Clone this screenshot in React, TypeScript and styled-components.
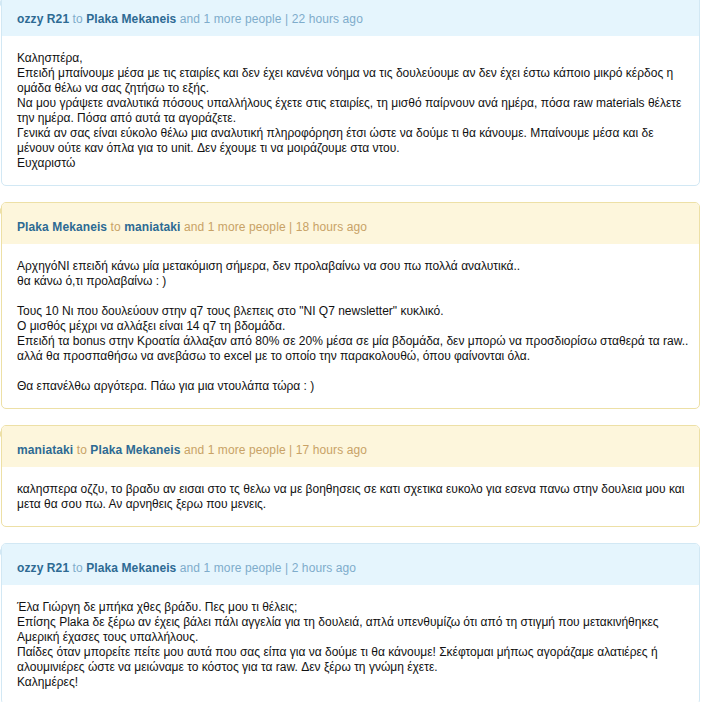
import React from "react";
import styled, { createGlobalStyle } from "styled-components";

const Global = createGlobalStyle`
  html, body { margin: 0; padding: 0; background: #ffffff; }
  body { font-family: "Liberation Sans", Arial, sans-serif; font-size: 12px; color: #111; }
`;

type Tone = "blue" | "yellow";

const palette = {
  blue: { head: "#e5f5fd", border: "#d2e8f4", meta: "#7eaccb" },
  yellow: { head: "#fdf6dc", border: "#ede0a6", meta: "#c8a266" },
};

const Feed = styled.div`
  display: flex;
  flex-direction: column;
  gap: 16px;
  margin-top: -6px;
  padding: 0 4px 0 1px;
`;

const Card = styled.div<{ $tone: Tone }>`
  position: relative;
  border: 1px solid ${(p) => palette[p.$tone].border};
  border-radius: 5px;
  background: #fff;
  &::before {
    content: "";
    position: absolute;
    left: -3px;
    top: 3px;
    border-style: solid;
    border-width: 5px 3px 5px 0;
    border-color: transparent ${(p) => palette[p.$tone].border} transparent transparent;
  }
`;

const Header = styled.div<{ $tone: Tone }>`
  background: ${(p) => palette[p.$tone].head};
  border-radius: 4px 4px 0 0;
  padding: 17px 15px 9px;
  line-height: 15px;
  font-size: 12px;
  letter-spacing: 0.1px;
  color: ${(p) => palette[p.$tone].meta};
  white-space: nowrap;
`;

const Name = styled.span`
  font-weight: bold;
  color: #2d6a93;
`;

const Body = styled.div`
  padding: 15px 15px 14px;
  line-height: 15px;
  font-size: 12px;
  color: #111;
`;

const Line = styled.div`
  min-height: 15px;
  white-space: nowrap;
`;

type Post = {
  tone: Tone;
  from: string;
  to: string;
  when: string;
  lines: string[];
};

const posts: Post[] = [
  {
    tone: "blue",
    from: "ozzy R21",
    to: "Plaka Mekaneis",
    when: "22 hours ago",
    lines: [
      "Καλησπέρα,",
      "Επειδή μπαίνουμε μέσα με τις εταιρίες και δεν έχει κανένα νόημα να τις δουλεύουμε αν δεν έχει έστω κάποιο μικρό κέρδος η",
      "ομάδα θέλω να σας ζητήσω το εξής.",
      "Να μου γράψετε αναλυτικά πόσους υπαλλήλους έχετε στις εταιρίες, τη μισθό παίρνουν ανά ημέρα, πόσα raw materials θέλετε",
      "την ημέρα. Πόσα από αυτά τα αγοράζετε.",
      "Γενικά αν σας είναι εύκολο θέλω μια αναλυτική πληροφόρηση έτσι ώστε να δούμε τι θα κάνουμε. Μπαίνουμε μέσα και δε",
      "μένουν ούτε καν όπλα για το unit. Δεν έχουμε τι να μοιράζουμε στα ντου.",
      "Ευχαριστώ",
    ],
  },
  {
    tone: "yellow",
    from: "Plaka Mekaneis",
    to: "maniataki",
    when: "18 hours ago",
    lines: [
      "ΑρχηγόΝΙ επειδή κάνω μία μετακόμιση σήμερα, δεν προλαβαίνω να σου πω πολλά αναλυτικά..",
      "θα κάνω ό,τι προλαβαίνω : )",
      "",
      "Τους 10 Νι που δουλεύουν στην q7 τους βλεπεις στο \"NI Q7 newsletter\" κυκλικό.",
      "Ο μισθός μέχρι να αλλάξει είναι 14 q7 τη βδομάδα.",
      "Επειδή τα bonus στην Κροατία άλλαξαν από 80% σε 20% μέσα σε μία βδομάδα, δεν μπορώ να προσδιορίσω σταθερά τα raw..",
      "αλλά θα προσπαθήσω να ανεβάσω το excel με το οποίο την παρακολουθώ, όπου φαίνονται όλα.",
      "",
      "Θα επανέλθω αργότερα. Πάω για μια ντουλάπα τώρα : )",
    ],
  },
  {
    tone: "yellow",
    from: "maniataki",
    to: "Plaka Mekaneis",
    when: "17 hours ago",
    lines: [
      "καλησπερα οζζυ, το βραδυ αν εισαι στο τς θελω να με βοηθησεις σε κατι σχετικα ευκολο για εσενα πανω στην δουλεια μου και",
      "μετα θα σου πω. Αν αρνηθεις ξερω που μενεις.",
    ],
  },
  {
    tone: "blue",
    from: "ozzy R21",
    to: "Plaka Mekaneis",
    when: "2 hours ago",
    lines: [
      "Έλα Γιώργη δε μπήκα χθες βράδυ. Πες μου τι θέλεις;",
      "Επίσης Plaka δε ξέρω αν έχεις βάλει πάλι αγγελία για τη δουλειά, απλά υπενθυμίζω ότι από τη στιγμή που μετακινήθηκες",
      "Αμερική έχασες τους υπαλλήλους.",
      "Παίδες όταν μπορείτε πείτε μου αυτά που σας είπα για να δούμε τι θα κάνουμε! Σκέφτομαι μήπως αγοράζαμε αλατιέρες ή",
      "αλουμινιέρες ώστε να μειώναμε το κόστος για τα raw. Δεν ξέρω τη γνώμη έχετε.",
      "Καλημέρες!",
    ],
  },
];

export default function App() {
  return (
    <>
      <Global />
      <Feed>
        {posts.map((p, i) => (
          <Card key={i} $tone={p.tone}>
            <Header $tone={p.tone}>
              <Name>{p.from}</Name> to <Name>{p.to}</Name> and 1 more people | {p.when}
            </Header>
            <Body>
              {p.lines.map((l, j) => (
                <Line key={j}>{l}</Line>
              ))}
            </Body>
          </Card>
        ))}
      </Feed>
    </>
  );
}
